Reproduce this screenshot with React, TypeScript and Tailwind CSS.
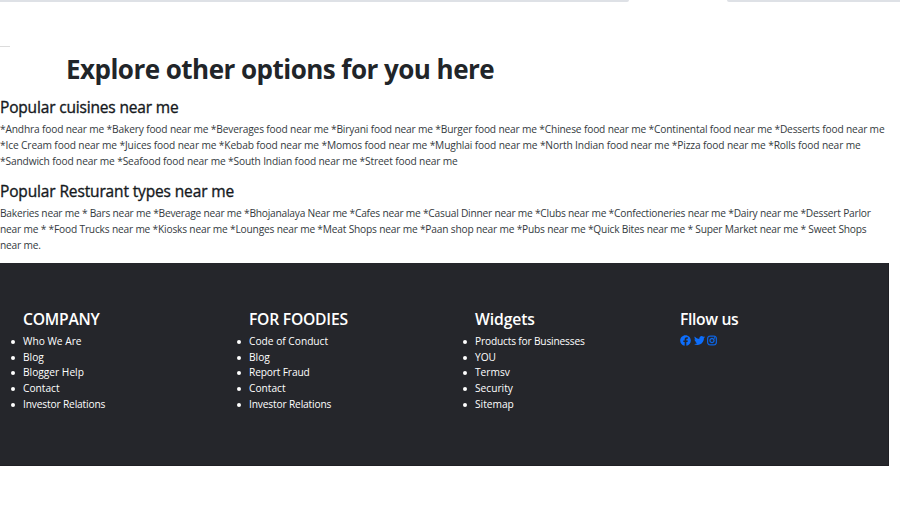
import { FaFacebook, FaInstagram, FaTwitter } from "react-icons/fa";

const cuisines = [
  { text: "*Andhra food near me *Bakery food near me *Beverages food near me *Biryani food near me *Burger food near me *Chinese food near me *Continental food near me *Desserts food near me", fit: "tracking-[-0.164px]" },
  { text: "*Ice Cream food near me *Juices food near me *Kebab food near me *Momos food near me *Mughlai food near me *North Indian food near me *Pizza food near me *Rolls food near me", fit: "tracking-[-0.128px]" },
  { text: "*Sandwich food near me *Seafood food near me *South Indian food near me *Street food near me", fit: "tracking-[-0.14px]" },
];

const restaurants = [
  { text: "Bakeries near me * Bars near me *Beverage near me *Bhojanalaya Near me *Cafes near me *Casual Dinner near me *Clubs near me *Confectioneries near me *Dairy near me *Dessert Parlor", fit: "tracking-[-0.212px]" },
  { text: "near me * *Food Trucks near me *Kiosks near me *Lounges near me *Meat Shops near me *Paan shop near me *Pubs near me *Quick Bites near me * Super Market near me * Sweet Shops", fit: "tracking-[-0.19px]" },
  { text: "near me.", fit: "tracking-[-0.19px]" },
];

const columns = [
  { title: "COMPANY", width: "w-[226px]", fit: "tracking-[-0.25px]", links: ["Who We Are", "Blog", "Blogger Help", "Contact", "Investor Relations"] },
  { title: "FOR FOODIES", width: "w-[226px]", fit: "tracking-[-0.25px]", links: ["Code of Conduct", "Blog", "Report Fraud", "Contact", "Investor Relations"] },
  { title: "Widgets", width: "w-[205px]", fit: "tracking-[-0.1px]", links: ["Products for Businesses", "YOU", "Termsv", "Security", "Sitemap"] },
];

const linkFit: Record<string, string> = {
  "Investor Relations": "tracking-[-0.15px]",
  "Products for Businesses": "tracking-[-0.18px]",
  "Report Fraud": "tracking-[-0.15px]",
};

function Section({ title, fit, lines }: { title: string; fit: string; lines: { text: string; fit: string }[] }) {
  return (
    <section>
      <h2 className={`h-[25px] text-[15.5px] leading-[25px] whitespace-nowrap text-[#15191d] [-webkit-text-stroke:0.35px_#15191d] ${fit}`}><span>{title}</span></h2>
      <p className="h-[49px] pt-px text-[10.2px] leading-[16px] text-[#343a40]">
        {lines.map((line) => (
          <span key={line.text} className={`block w-max whitespace-nowrap ${line.fit}`}>{line.text}</span>
        ))}
      </p>
    </section>
  );
}

export default function App() {
  return (
    <div className="h-[506px] w-[900px] overflow-hidden bg-white font-['Open_Sans',sans-serif]">
      <div className="flex h-[2px] justify-between">
        <div className="w-[629px] rounded-br-[2px] bg-[#dee1e6]" />
        <div className="w-[173px] rounded-bl-[2px] bg-[#dee1e6]" />
      </div>
      <div className="h-[45px] w-[10px] border-b border-[#dcdcdc]" />
      <main className="h-[216px]">
        <h1 className="h-[48px] pl-[66px] text-[26px] leading-[44px] font-bold tracking-[-0.53px] whitespace-nowrap text-[#212529]"><span>Explore other options for you here</span></h1>
        <Section title="Popular cuisines near me" fit="tracking-[-0.17px]" lines={cuisines} />
        <div className="h-[10px]" />
        <Section title="Popular Resturant types near me" fit="tracking-[-0.14px]" lines={restaurants} />
      </main>
      <footer className="flex h-[203px] w-[889px] border-r border-b border-[#1f1f24] bg-[#25262b] pt-[44px] pl-[23px] text-white">
        {columns.map((column) => (
          <div key={column.title} className={column.width}>
            <h3 className={`h-[26px] text-[15.7px] leading-[24px] font-semibold whitespace-nowrap ${column.fit}`}>{column.title}</h3>
            <ul className="pt-[0.7px] text-[10.2px] leading-[15.85px]">
              {column.links.map((link) => (
                <li key={link} className={`relative whitespace-nowrap ${linkFit[link] ?? "tracking-normal"}`}>
                  <span className="absolute top-[6px] -left-[12px] size-[4px] rounded-full bg-white" />
                  {link}
                </li>
              ))}
            </ul>
          </div>
        ))}
        <div>
          <h3 className="h-[26px] text-[15.7px] leading-[24px] font-semibold tracking-[-0.36px] whitespace-nowrap">Fllow us</h3>
          <div className="flex gap-[2.5px] pt-[2px] text-[#0d6efd]">
            <FaFacebook className="size-[11px]" />
            <FaTwitter className="size-[11px]" />
            <FaInstagram className="h-[11px] w-[10px] stroke-current [stroke-width:14]" />
          </div>
        </div>
      </footer>
    </div>
  );
}
